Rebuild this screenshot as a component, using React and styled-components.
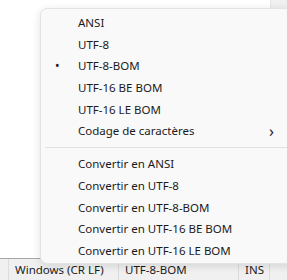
import React from 'react';
import styled, { createGlobalStyle } from 'styled-components';

const GlobalStyle = createGlobalStyle`
    html, body {
        margin: 0;
        padding: 0;
        width: 287px;
        height: 280px;
        overflow: hidden;
        background: #ffffff;
    }
    #root {
        height: 100%;
    }
`;

// Menu entries
const encodings = [
    { label: 'ANSI' },
    { label: 'UTF-8' },
    { label: 'UTF-8-BOM', checked: true },
    { label: 'UTF-16 BE BOM' },
    { label: 'UTF-16 LE BOM' },
    { label: 'Codage de caractères', submenu: true },
];

const conversions = [
    'Convertir en ANSI',
    'Convertir en UTF-8',
    'Convertir en UTF-8-BOM',
    'Convertir en UTF-16 BE BOM',
    'Convertir en UTF-16 LE BOM',
];

const App = () => {
    return (
        <Window>
            <GlobalStyle />
            <Editor>
                <TextArea />
                <ScrollTrack />
            </Editor>
            <StatusBar>
                <Cell $width={110}>Windows (CR LF)</Cell>
                <Cell $width={120}>UTF-8-BOM</Cell>
                <Cell $width={32}>INS</Cell>
            </StatusBar>

            <Menu>
                {encodings.map((item) => (
                    <Item key={item.label}>
                        <Check>{item.checked ? '•' : ''}</Check>
                        <Label>{item.label}</Label>
                        {item.submenu && <Arrow>›</Arrow>}
                    </Item>
                ))}
                <Separator />
                {conversions.map((label) => (
                    <Item key={label}>
                        <Check />
                        <Label>{label}</Label>
                    </Item>
                ))}
            </Menu>
        </Window>
    );
};

const Window = styled.div`
    position: relative;
    display: flex;
    flex-direction: column;
    height: 280px;
    width: 287px;
    overflow: hidden;
    font-family: "Noto Sans", "Open Sans", sans-serif;
    font-size: 11.5px;
    color: #1b1b1b;
`;

const Editor = styled.div`
    flex: 1;
    display: flex;
    background: #ffffff;
`;

const TextArea = styled.div`
    flex: 1;
`;

const ScrollTrack = styled.div`
    width: 16px;
    background: #f0f0f0;
    border-left: 1px solid #e6e6e6;
`;

const StatusBar = styled.div`
    height: 21px;
    flex-shrink: 0;
    display: flex;
    align-items: stretch;
    padding-left: 8px;
    background: #f0f0f0;
    border-top: 1px solid #a8a8a8;
`;

const Cell = styled.div`
    width: ${(p) => p.$width}px;
    display: flex;
    align-items: center;
    padding-left: 6px;
    box-sizing: border-box;
    border-left: 1px solid #dcdcdc;
    &:last-child {
        border-right: 1px solid #dcdcdc;
    }
`;

const Menu = styled.div`
    position: absolute;
    top: 8px;
    left: 40px;
    width: 270px;
    height: 256px;
    box-sizing: border-box;
    padding: 3px 0 4px;
    background: #f9f9f9;
    border: 1px solid #e3e3e3;
    border-radius: 7px;
    box-shadow: 0 2px 8px rgba(0, 0, 0, 0.12);
`;

const Item = styled.div`
    height: 21.6px;
    display: flex;
    align-items: center;
`;

const Check = styled.span`
    width: 37px;
    padding-left: 14px;
    box-sizing: border-box;
    font-size: 12px;
`;

const Label = styled.span`
    flex: 1;
    white-space: nowrap;
`;

const Arrow = styled.span`
    width: 40px;
    font-size: 16px;
    line-height: 1;
    padding-left: 1px;
`;

const Separator = styled.div`
    height: 1px;
    margin: 5.5px 4px 5px;
    background: #e0e0e0;
`;

export default App;
